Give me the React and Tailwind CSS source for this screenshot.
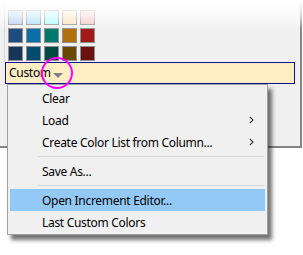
import React from 'react';

const swatchRows = [
    ['#b6cbec', '#a9dff9', '#a6fbff', '#fde3bb', '#f7c3c3'],
    ['#1f4c7e', '#0a6fa6', '#00786c', '#b0700c', '#a11a16'],
    ['#173558', '#034b6c', '#024a41', '#6c4700', '#6a1210'],
];

const menuItems = [
    { label: 'Clear' },
    { label: 'Load', sub: true },
    { label: 'Create Color List from Column...', sub: true },
    { sep: true },
    { label: 'Save As...' },
    { sep: true },
    { label: 'Open Increment Editor...', active: true },
    { label: 'Last Custom Colors' },
];

function Chevron() {
    return (
        <svg width="5" height="8" viewBox="0 0 5 8" className="absolute right-[11px] top-[7px]">
            <path d="M0.8 0.8 L4 4 L0.8 7.2" fill="none" stroke="#333" strokeWidth="1.1" />
        </svg>
    );
}

export default function App() {
    return (
        <div className="relative w-[303px] h-[255px] overflow-hidden bg-white text-[12px] tracking-[-0.3px] text-black" style={{ fontFamily: '"Noto Sans", "Open Sans", sans-serif' }}>
            {/* dialog panel */}
            <div className="w-[302px] h-[148px] bg-[#f0f0f0] border-r-2 border-b-2 border-[#858585]">
                <div className="h-[62px] border-l border-[#d6d6d6] ml-[4px] pt-[10px] pl-[3px]">
                    <div className="grid grid-cols-[repeat(5,15px)] gap-[3px]">
                        {swatchRows.flat().map((c, i) => (
                            <div key={i} className="w-[15px] h-[15px] border border-[#8f8f8f]" style={{ background: c }} />
                        ))}
                    </div>
                </div>
                <div className="ml-[5px] w-[290px] h-[22px] bg-[#ffedc4] border border-[#10108a] flex items-center pl-[3px] leading-none">
                    <span>Custom</span>
                    <svg width="10" height="5" viewBox="0 0 10 5" className="ml-[2px] mt-[4px]">
                        <path d="M0 0 H10 L5 5 Z" fill="#808080" />
                    </svg>
                </div>
            </div>

            {/* top fade */}
            <div className="absolute left-0 top-0 w-full h-[30px] bg-gradient-to-b from-white via-white/70 to-white/0" />

            {/* context menu */}
            <div className="absolute left-[7px] top-[84px] w-[261px] bg-[#f0f0f0] border border-[#a0a0a0] px-[2px] pt-[2px] pb-[1px] shadow-[4px_5px_4px_rgba(0,0,0,0.55)]">
                {menuItems.map((it, i) =>
                    it.sep ? (
                        <div key={i} className="h-[7px] flex items-center">
                            <div className="ml-[28px] mr-[1px] h-px flex-1 bg-[#d7d7d7]" />
                        </div>
                    ) : (
                        <div key={i} className={`relative h-[22px] flex items-center pl-[32px] pt-[2px] ${it.active ? 'bg-[#93c9f6]' : ''}`}>
                            <span className="leading-none">{it.label}</span>
                            {it.sub && <Chevron />}
                        </div>
                    )
                )}
            </div>

            {/* highlight circle */}
            <div className="absolute left-[41px] top-[57px] w-[32px] h-[32px] rounded-full border-2 border-[#ff00ff]" />
        </div>
    );
}
